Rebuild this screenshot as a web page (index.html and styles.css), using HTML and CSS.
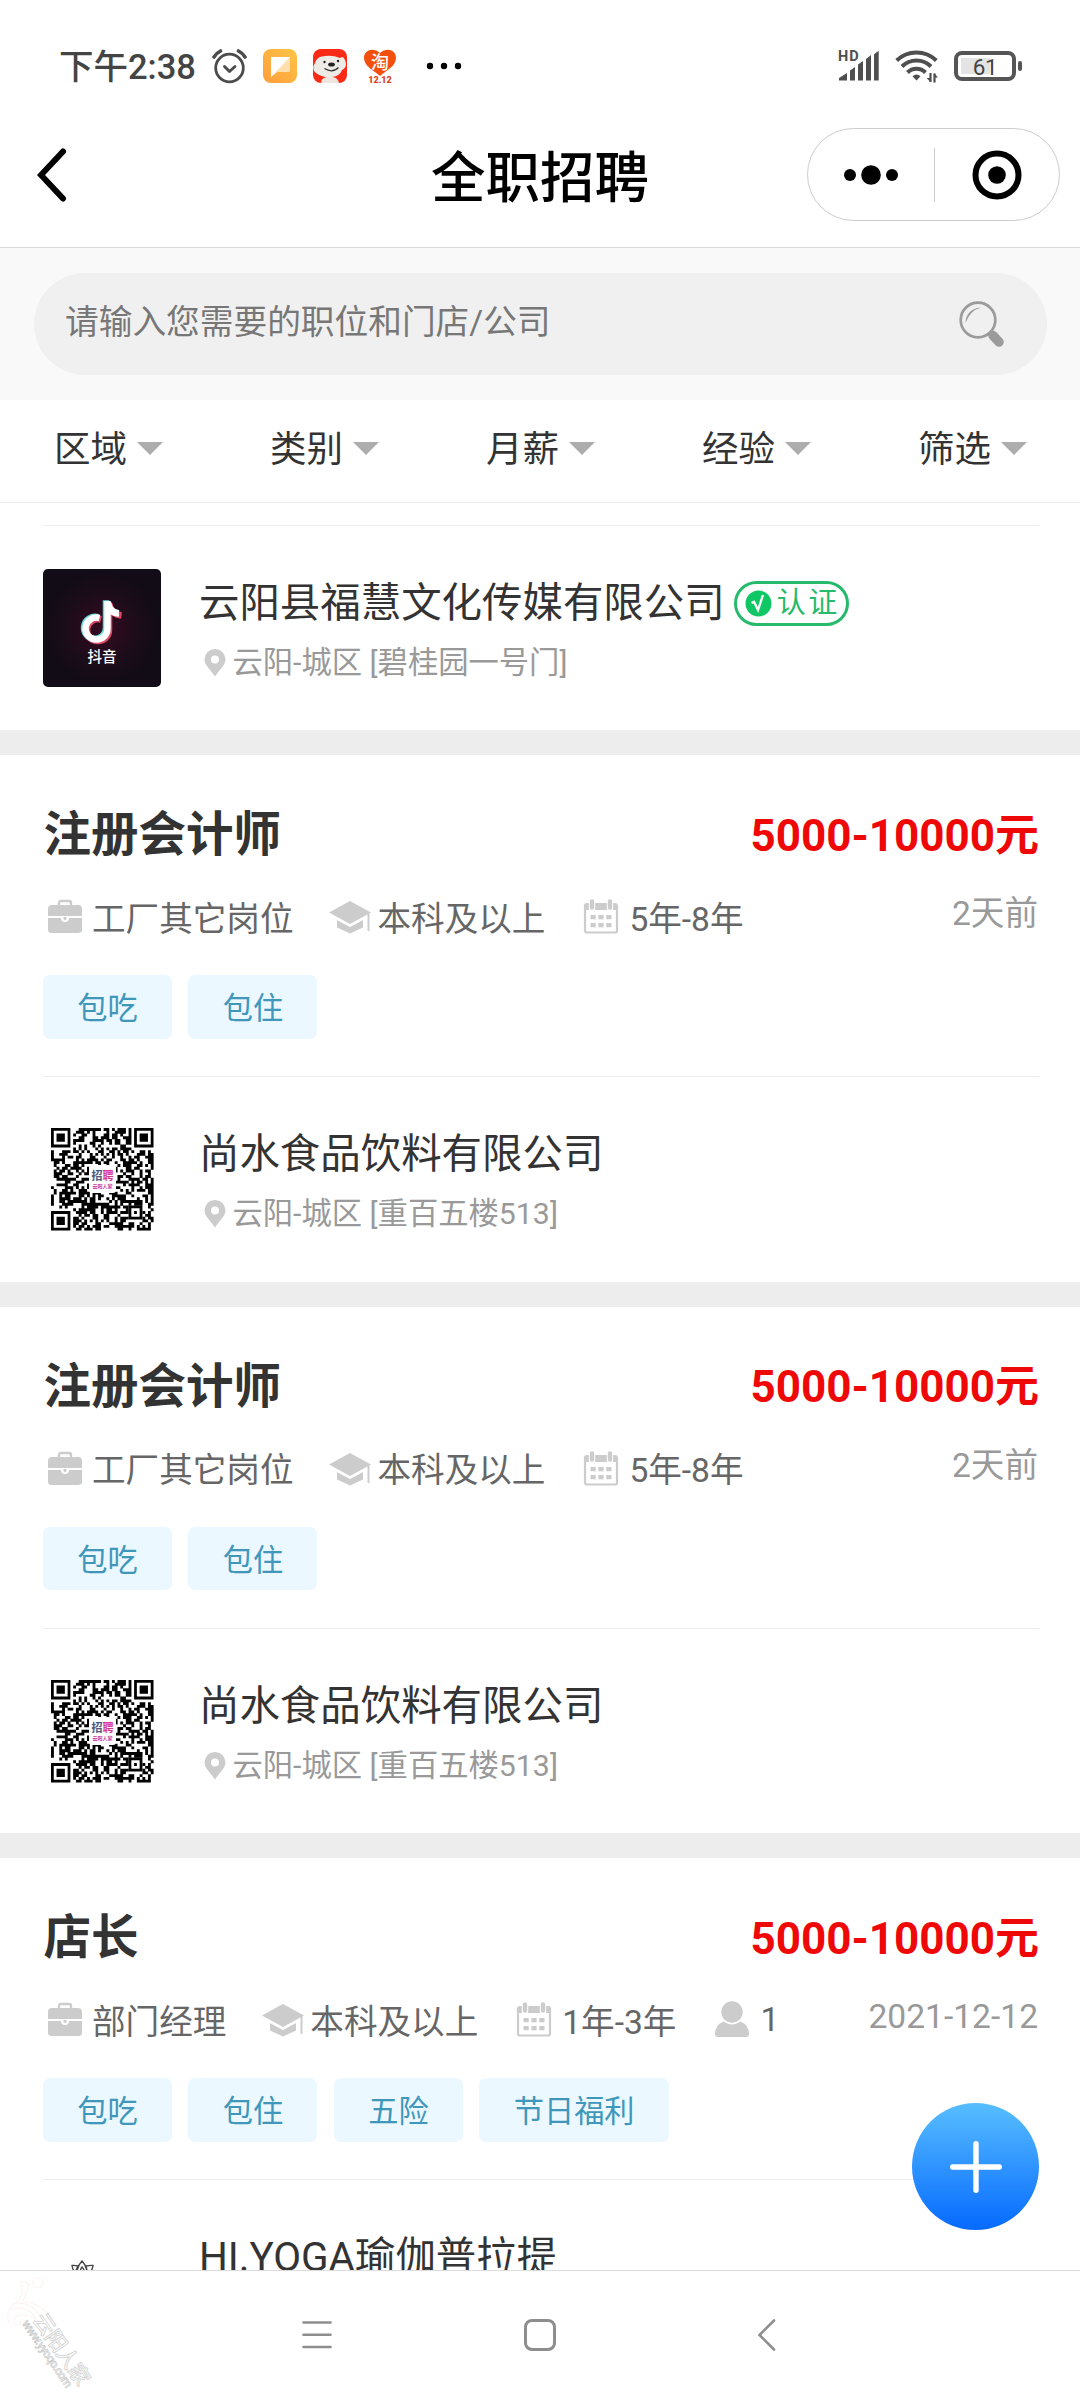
FILE: index.html
```html
<!DOCTYPE html>
<html lang="zh-CN">
<head>
<meta charset="utf-8">
<title>全职招聘</title>
<link rel="stylesheet" href="styles.css">
</head>
<body>
<svg class="defs" width="0" height="0" aria-hidden="true">
  <symbol id="i-case" viewBox="0 0 42 36">
    <path d="M15 7V4q0-2 2-2h8q2 0 2 2v3" fill="none" stroke="#ccc" stroke-width="2.4"/>
    <path d="M8 6h26q4 0 4 4v7H4v-7q0-4 4-4zM4 19h13a4 4 0 0 0 8 0h13v12q0 3-4 3H8q-4 0-4-3z" fill="#ccc"/>
    <path d="M19 17.500h4v2a2 2 0 0 1-4 0z" fill="#ccc" stroke="#fff" stroke-width="1"/>
  </symbol>
  <symbol id="i-cap" viewBox="0 0 42 36">
    <path d="M21 2L42 13.500 21 25 0 13.500z" fill="#ccc"/>
    <path d="M8 21l13 7 13-7v7.500L21 34.500 8 28.500z" fill="#ccc"/>
    <path d="M8 20.200l13 6.600 13-6.600" fill="none" stroke="#fff" stroke-width="1.200"/>
    <path d="M39.500 14v18" stroke="#ccc" stroke-width="2"/>
  </symbol>
  <symbol id="i-cal" viewBox="0 0 42 36">
    <path d="M4 11V7q0-3 3-3h26q3 0 3 3v4z" fill="#ccc"/>
    <rect x="4" y="5" width="32" height="28.500" rx="2" fill="none" stroke="#ccc" stroke-width="2.200"/>
    <path d="M11 3v6M29 3v6" stroke="#fff" stroke-width="6.400" stroke-linecap="round"/>
    <path d="M11 2.500v6M29 2.500v6" stroke="#ccc" stroke-width="4.400" stroke-linecap="round"/>
    <path d="M9.500 16h5.200v4.200H9.500zM17.400 16h5.200v4.200h-5.200zM25.300 16h5.200v4.200h-5.200zM9.500 24h5.200v4.200H9.500zM17.400 24h5.200v4.200h-5.200zM25.300 24h5.200v4.200h-5.200z" fill="#ccc"/>
  </symbol>
  <symbol id="i-user" viewBox="0 0 42 38">
    <circle cx="20" cy="12" r="10.700" fill="#ccc"/>
    <path d="M3 34q0-9 8.500-12.500Q20 27.500 28.500 21.500 37 25 37 34q0 3-3 3H6q-3 0-3-3z" fill="#ccc"/>
  </symbol>
  <symbol id="i-pin" viewBox="0 0 22 28">
    <path d="M11 0a10.500 10.500 0 0 1 10.500 10.500C21.500 16.500 15 21 11 27.500 7 21 .500 16.500 .500 10.500A10.500 10.500 0 0 1 11 0zm0 6.600a4 4 0 1 0 0 8 4 4 0 0 0 0-8z" fill="#ccc" fill-rule="evenodd"/>
  </symbol>
</svg>

<div class="screen">
  <header class="status">
    <div class="status-left">
      <span class="clock">下午2:38</span>
      <svg class="st-icon" width="35" height="35" viewBox="0 0 35 35" fill="none" stroke="#4c4c4c" stroke-linecap="round">
        <circle cx="17.500" cy="19" r="13.800" stroke-width="2.800"/>
        <path d="M12.500 17.500l5 5 5.500-5" stroke-width="2.900" stroke-linejoin="round"/>
        <path d="M2 8q2.500-4 6.500-6M33 8q-2.500-4-6.500-6" stroke-width="3.600"/>
      </svg>
      <svg class="st-icon" width="34" height="34" viewBox="0 0 34 34">
        <defs><linearGradient id="g-note" x1="1" y1="0" x2="0" y2="1"><stop offset="0" stop-color="#ffc545"/><stop offset="1" stop-color="#ff9d3b"/></linearGradient></defs>
        <rect width="34" height="34" rx="8" fill="url(#g-note)"/>
        <path d="M8 8h19v13.500q0 1.500-1.500 1.500H14.500L8 28z" fill="#ffdfae"/>
        <path d="M8 8h19L8 28z" fill="#fff"/>
      </svg>
      <svg class="st-icon" width="34" height="34" viewBox="0 0 34 34">
        <rect width="34" height="34" rx="8" fill="#fa2a17"/>
        <path d="M2 14Q4 7 12 7q8-1 15 2 3-3 5 2 3 7-3 10-2 6-10 7-10 1-16-4-5-4-1-10z" fill="#eeeae6"/>
        <path d="M8 34q0-5 6-6h6q5 1 6 6z" fill="#eee5df"/>
        <ellipse cx="18.500" cy="15.500" rx="3.400" ry="2" fill="#222"/>
        <circle cx="11.500" cy="13" r="1.200" fill="#222"/><circle cx="25" cy="12" r="1.200" fill="#222"/>
        <path d="M11.500 19.500q8 5 14-1" fill="none" stroke="#333" stroke-width="1.200"/>
      </svg>
      <svg class="st-icon" width="34" height="35" viewBox="0 0 34 35">
        <path d="M17 27C10 21 1 17 1 9 1 3 6 0 11 1q3 0 6 3 3-3 6-3c5-1 10 2 10 8 0 8-9 12-16 18z" fill="#f4500d"/>
        <text x="17" y="20" text-anchor="middle" class="t-tao">淘</text>
        <text x="17" y="34" text-anchor="middle" class="t-1212">12.12</text>
      </svg>
      <svg class="st-dots" width="36" height="8" viewBox="0 0 36 8"><circle cx="4" cy="4" r="3.200"/><circle cx="18" cy="4" r="3.200"/><circle cx="32" cy="4" r="3.200"/></svg>
    </div>
    <div class="status-right">
      <svg width="43" height="34" viewBox="0 0 43 34">
        <text x="1" y="12" class="t-hd">HD</text>
        <path d="M2 31.500v-2.500l8-5v7.500zM13 31.500V21.500l5-3.500v13.500zM21 31.500V15.500l5-3.500v19.500zM29 31.500V10l5-4v25.500zM37 31.500V5.500q2-2.500 4.700-3.500v29.500z" fill="#4f4f4f"/>
      </svg>
      <svg width="44" height="36" viewBox="0 0 44 36" fill="none" stroke="#4f4f4f" stroke-width="4">
        <path d="M1.700 12.500a28.500 28.500 0 0 1 39.600 0M7 18.500a20.500 20.500 0 0 1 29 0M12.500 24.500a12.700 12.700 0 0 1 18 0"/>
        <path d="M21.500 32.500l-4-4.200q4-3.600 8 0z" fill="#4f4f4f" stroke="none"/>
        <path d="M35.500 25v9M39.500 25.500v9" stroke-width="2.200"/>
        <path d="M36 34.500l-4.500-4.500H36zM39 25l4 4.500h-4z" fill="#4f4f4f" stroke="none"/>
      </svg>
      <div class="battery"><span class="battery-level"></span><span class="battery-num">61</span></div>
    </div>
  </header>

  <nav class="titlebar">
    <svg class="back" width="30" height="54" viewBox="0 0 30 54"><path d="M26 3.500L4 27l22 23.500" fill="none" stroke="#000" stroke-width="6" stroke-linecap="round"/></svg>
    <h1>全职招聘</h1>
    <div class="capsule">
      <svg width="54" height="20" viewBox="0 0 54 20"><circle cx="6" cy="10" r="6"/><circle cx="27" cy="10" r="9.800"/><circle cx="48" cy="10" r="6"/></svg>
      <span class="capsule-line"></span>
      <svg width="50" height="50" viewBox="0 0 50 50"><circle cx="25" cy="25" r="21.500" fill="none" stroke="#000" stroke-width="6"/><circle cx="25" cy="25" r="8.800"/></svg>
    </div>
  </nav>

  <div class="search-wrap">
    <div class="search">
      <span>请输入您需要的职位和门店/公司</span>
      <svg width="46" height="46" viewBox="0 0 46 46">
        <circle cx="19" cy="19" r="17.300" fill="none" stroke="#9b9b9b" stroke-width="2.700"/>
        <path d="M6.500 22Q7 8 22 6.500 11 9.500 6.500 22z" fill="#9b9b9b"/>
        <path d="M34 34.500l6 6.500" stroke="#9b9b9b" stroke-width="9.500" stroke-linecap="round"/>
      </svg>
    </div>
  </div>

  <div class="filters">
    <div class="filter"><span>区域</span><i></i></div>
    <div class="filter"><span>类别</span><i></i></div>
    <div class="filter"><span>月薪</span><i></i></div>
    <div class="filter"><span>经验</span><i></i></div>
    <div class="filter"><span>筛选</span><i></i></div>
  </div>

  <main class="list">
    <section class="card card-first">
      <div class="company">
        <svg class="logo" width="118" height="118" viewBox="0 0 118 118">
          <defs><radialGradient id="g-dy"><stop offset="0" stop-color="#360a20"/><stop offset=".6" stop-color="#1c0c1a"/><stop offset="1" stop-color="#110c16"/></radialGradient></defs>
          <rect width="118" height="118" fill="url(#g-dy)"/>
          <g fill="none" stroke-width="6.500">
            <path d="M64.500 32v27.500a11 11 0 1 1-8-10.500M65 34q2 10 12 11" stroke="#62d7d9" transform="translate(-1.500 -.8)"/>
            <path d="M64.500 32v27.500a11 11 0 1 1-8-10.500M65 34q2 10 12 11" stroke="#e04a68" transform="translate(1.500 1.500)"/>
            <path d="M64.500 32v27.500a11 11 0 1 1-8-10.500M65 34q2 10 11 10.500" stroke="#fff"/>
          </g>
          <text x="59" y="93" text-anchor="middle" class="t-dy">抖音</text>
        </svg>
        <div class="company-text">
          <div class="name">云阳县福慧文化传媒有限公司
            <span class="verified"><svg width="27" height="27" viewBox="0 0 27 27"><circle cx="13.500" cy="13.500" r="13" fill="#10c765"/><path d="M6.500 13l2.500-1.300 4 8.300L18 5" fill="none" stroke="#fff" stroke-width="2.300"/></svg>认证</span>
          </div>
          <div class="addr"><svg width="22" height="28"><use href="#i-pin"/></svg>云阳-城区 [碧桂园一号门]</div>
        </div>
      </div>
    </section>

    <section class="card">
      <div class="head"><h2>注册会计师</h2><span class="pay">5000-10000元</span></div>
      <div class="meta">
        <span class="m"><svg width="42" height="36"><use href="#i-case"/></svg><b>工厂其它岗位</b></span>
        <span class="m"><svg width="42" height="36"><use href="#i-cap"/></svg><b>本科及以上</b></span>
        <span class="m"><svg width="42" height="36"><use href="#i-cal"/></svg><b>5年-8年</b></span>
        <span class="date">2天前</span>
      </div>
      <div class="tags"><span>包吃</span><span>包住</span></div>
      <div class="company">
        <svg class="logo qr" width="118" height="118" viewBox="0 0 118 118"></svg>
        <div class="company-text">
          <div class="name">尚水食品饮料有限公司</div>
          <div class="addr"><svg width="22" height="28"><use href="#i-pin"/></svg>云阳-城区 [重百五楼513]</div>
        </div>
      </div>
    </section>

    <section class="card">
      <div class="head"><h2>注册会计师</h2><span class="pay">5000-10000元</span></div>
      <div class="meta">
        <span class="m"><svg width="42" height="36"><use href="#i-case"/></svg><b>工厂其它岗位</b></span>
        <span class="m"><svg width="42" height="36"><use href="#i-cap"/></svg><b>本科及以上</b></span>
        <span class="m"><svg width="42" height="36"><use href="#i-cal"/></svg><b>5年-8年</b></span>
        <span class="date">2天前</span>
      </div>
      <div class="tags"><span>包吃</span><span>包住</span></div>
      <div class="company">
        <svg class="logo qr" width="118" height="118" viewBox="0 0 118 118"></svg>
        <div class="company-text">
          <div class="name">尚水食品饮料有限公司</div>
          <div class="addr"><svg width="22" height="28"><use href="#i-pin"/></svg>云阳-城区 [重百五楼513]</div>
        </div>
      </div>
    </section>

    <section class="card">
      <div class="head"><h2>店长</h2><span class="pay">5000-10000元</span></div>
      <div class="meta">
        <span class="m"><svg width="42" height="36"><use href="#i-case"/></svg><b>部门经理</b></span>
        <span class="m"><svg width="42" height="36"><use href="#i-cap"/></svg><b>本科及以上</b></span>
        <span class="m"><svg width="42" height="36"><use href="#i-cal"/></svg><b>1年-3年</b></span>
        <span class="m"><svg class="user" width="42" height="38"><use href="#i-user"/></svg><b>1</b></span>
        <span class="date">2021-12-12</span>
      </div>
      <div class="tags"><span>包吃</span><span>包住</span><span>五险</span><span>节日福利</span></div>
      <div class="company">
        <svg class="logo" width="118" height="118" viewBox="0 0 118 118">
          <path d="M31 52l4-9q-4-1-6-.500 1 6 5 9M45 52l-2-9q5-1 7-.500-1 6-5 9M34 48q1-6 5-10 4 4 5 10M37 52q0-6 2-8 3 3 3 8" fill="none" stroke="#444" stroke-width="1.400"/>
        </svg>
        <div class="company-text"><div class="name">HI.YOGA瑜伽普拉提</div></div>
      </div>
    </section>

    <button class="fab" aria-label="发布"><svg width="52" height="52" viewBox="0 0 52 52"><path d="M26 2.700v46.600M2.700 26h46.600" stroke="#fff" stroke-width="5.400" stroke-linecap="round"/></svg></button>
  </main>

  <footer class="sysnav">
    <svg width="30" height="30" viewBox="0 0 30 30"><path d="M1.500 2.500h27M1.500 14.800h27M1.500 27h27" stroke="#8e8e8e" stroke-width="2.600" stroke-linecap="round"/></svg>
    <svg class="home" width="32" height="32" viewBox="0 0 32 32"><rect x="1.500" y="1.500" width="29" height="29" rx="6.500" fill="none" stroke="#8e8e8e" stroke-width="3"/></svg>
    <svg width="19" height="32" viewBox="0 0 19 32"><path d="M17 1.500L2.500 16 17 30.500" fill="none" stroke="#8e8e8e" stroke-width="2.600" stroke-linecap="round"/></svg>
    <svg class="mark" width="110" height="129" viewBox="0 0 110 129">
      <path d="M20 10q7 1 9 3-3 11-6 17 14 2 26 13M20 10q6 10-2 20-14 8-9 22M12 33q18-4 28 12M10 38q20-4 26 10-10-6-19-3-6 5-1 9 6 1 4-5M38 17a5 5 0 1 1 .100 0" fill="none" stroke="#fbf3f2" stroke-width="1.200"/>
      <g transform="translate(33 46) rotate(55.500)">
        <text x="2" y="2" class="t-mark" textLength="82">云阳人家</text>
        <text x="-1" y="13" class="t-url" textLength="79">www.yyoqo.com</text>
      </g>
    </svg>
  </footer>
</div>
<script src="qr.js"></script>
</body>
</html>
```
FILE: styles.css
```css
* { box-sizing: border-box; }
body {
  margin: 0;
  background: #fff;
  color: #333;
  font-family: Roboto, "Noto Sans CJK SC", sans-serif;
}
svg { display: block; flex: none; }
h1, h2 { margin: 0; }
b { font-weight: 400; }
.defs { position: absolute; }
.screen {
  width: 1080px;
  height: 2400px;
  overflow: hidden;
  display: flex;
  flex-direction: column;
}

.status {
  height: 102px;
  padding: 30px 58px 0 59px;
  display: flex;
  justify-content: space-between;
}
.status-left, .status-right { height: 72px; display: flex; align-items: center; }
.clock { width: 153px; padding-bottom: 4px; font-size: 34.500px; font-weight: 500; color: #444; white-space: nowrap; }
.st-icon { margin-right: 16px; }
.st-dots { margin-left: 13px; }
.status-right { gap: 15px; }
.t-tao { font-size: 18px; fill: #fff; font-weight: 500; }
.t-1212 { font-size: 9px; fill: #d9441c; font-weight: 900; }
.t-hd { font-size: 14.500px; fill: #4f4f4f; font-weight: 700; letter-spacing: 1px; }
.battery {
  position: relative;
  width: 62px;
  height: 30px;
  margin-right: 6px;
  border: 4px solid #555;
  border-radius: 8px;
  text-align: center;
}
.battery::after {
  content: "";
  position: absolute;
  right: -10px;
  top: 6px;
  width: 4px;
  height: 10px;
  border-radius: 2px;
  background: #555;
}
.battery-level { position: absolute; left: 3px; top: 3px; width: 29px; height: 16px; background: #e4e4e4; }
.battery-num { position: relative; font-size: 22.500px; line-height: 24px; color: #444; letter-spacing: -0.500px; }

.titlebar {
  height: 146px;
  padding: 0 20px 0 37px;
  border-bottom: 1px solid #d9d9d9;
  display: grid;
  grid-template-columns: 1fr auto 1fr;
  align-items: center;
}
.titlebar h1 { font-size: 54.500px; font-weight: 500; line-height: 80px; color: #000; padding-top: 6px; margin-left: -17px; }
.capsule {
  justify-self: end;
  width: 253px;
  height: 93px;
  border: 1px solid #ccc;
  border-radius: 47px;
  padding: 0 37px 0 36px;
  display: flex;
  align-items: center;
  justify-content: space-between;
}
.capsule-line { width: 1px; height: 54px; background: #ccc; margin-right: 1px; }

.search-wrap { height: 152px; padding: 25px 33px 0 34px; background: #f9f9f9; }
.search {
  height: 102px;
  border-radius: 51px;
  background: #f0f0f0;
  padding: 0 42px 0 31px;
  display: flex;
  align-items: center;
  justify-content: space-between;
  font-size: 33.700px;
  color: #777;
}
.search span { line-height: 50px; margin-top: -2px; }

.filters {
  height: 103px;
  border-bottom: 1px solid #ebebeb;
  display: grid;
  grid-template-columns: repeat(5, 216px);
}
.filter {
  display: flex;
  align-items: center;
  justify-content: center;
  gap: 10px;
  height: 97px;
  padding-left: 1px;
  font-size: 36.500px;
}
.filter span { margin-top: -4px; }
.filter i { border: 13px solid transparent; border-top-color: #adadad; border-bottom: 0; }

.list { position: relative; height: 1767px; overflow: hidden; }
.card { height: 551.500px; padding: 47px 41px 0 43px; border-bottom: 25px solid #ededed; }
.card-first { height: 252px; padding-top: 22px; }
.head { height: 66px; display: flex; align-items: center; justify-content: space-between; }
.head h2 { font-size: 47.500px; line-height: 66px; font-weight: 700; padding-left: 0.500px; }
.pay { font-size: 44px; line-height: 56px; margin-top: 1px; font-weight: 700; color: #ee0808; }
.meta { height: 50px; margin-top: 25px; padding-left: 1px; display: flex; gap: 36px; font-size: 33.600px; color: #666; }
.m { display: flex; align-items: center; gap: 6px; white-space: nowrap; }
.m svg { margin-top: -2px; }
.m b { margin-top: -4px; }
.m .user { margin-top: -5px; }
.date { margin-left: auto; line-height: 42px; color: #999; padding-right: 1px; }
.tags { display: flex; gap: 16.500px; margin-top: 32px; }
.tags span {
  height: 63.500px;
  padding: 0 34.300px;
  border-radius: 7px;
  background: #ecf8ff;
  color: #3f97bb;
  font-size: 30.200px;
  line-height: 68px;
}
.company { display: flex; gap: 38px; padding-top: 43px; border-top: 1px solid #eee; }
.tags + .company { margin-top: 37.500px; }
.logo { border-radius: 5px; }
.company-text { padding-top: 6px; }
.name { display: flex; align-items: center; font-size: 40.450px; line-height: 56px; height: 56px; white-space: nowrap; }
.addr { display: flex; align-items: center; gap: 6.500px; margin-top: 12px; padding-left: 5px; font-size: 30.300px; line-height: 40px; color: #999; white-space: nowrap; }
.verified {
  display: flex;
  align-items: center;
  gap: 5px;
  width: 115px;
  height: 45px;
  margin-left: 9px;
  padding-left: 8px;
  border: 3px solid #26bb6c;
  border-radius: 23px;
  color: #26bb6c;
  font-size: 29px;
  line-height: 38px;
  letter-spacing: 2.500px;
}
.t-dy { font-size: 14.500px; fill: #fff; font-weight: 500; }
.t-qr { font-size: 11px; font-weight: 700; }
.t-qr-sub { font-size: 5px; font-weight: 700; fill: #c8328e; }

.fab {
  position: absolute;
  left: 912px;
  top: 1600px;
  width: 127px;
  height: 127px;
  padding: 0;
  border: 0;
  border-radius: 50%;
  background: linear-gradient(#58beff, #066aff);
  display: grid;
  place-items: center;
}

.sysnav {
  position: relative;
  height: 130px;
  border-top: 1px solid #ddd;
  padding: 0 304px 1px 302px;
  display: flex;
  align-items: center;
  justify-content: space-between;
}
.home { margin-right: 10px; }
.mark { position: absolute; left: 0; top: 0; }
.t-mark { font-size: 21px; font-weight: 500; fill: #fff; stroke: #d2d2d2; stroke-width: 0.800px; }
.t-url { font-size: 12px; font-weight: 500; fill: #f4f4f4; stroke: #cacaca; stroke-width: 0.600px; }
```
FILE: qr.js
```js
// Draws a 37-module QR style pattern with finder and alignment squares.
const N = 37;
const UNIT = 102.5 / N;
const OFFSET = 8;

function square(x, y, size) {
  return `M${OFFSET + x * UNIT} ${OFFSET + y * UNIT}h${size * UNIT}v${size * UNIT}h${-size * UNIT}z`;
}

function pattern() {
  let seed = 20211;
  const rand = () => (seed = (seed * 16807) % 2147483647) / 2147483647;
  const finder = (x, y) =>
    (x < 8 && y < 8) || (x > N - 9 && y < 8) || (x < 8 && y > N - 9);
  let d = '';
  for (let y = 0; y < N; y++) {
    for (let x = 0; x < N; x++) {
      const dark = rand() > 0.48;
      const align = x > 27 && x < 33 && y > 27 && y < 33;
      if (dark && !finder(x, y) && !align) d += square(x, y, 1.04);
    }
  }
  return d;
}

function ring(x, y, size) {
  return square(x, y, size) + square(x + 1, y + 1, size - 2);
}

const body =
  `<path d="${pattern()}"/>` +
  `<path fill-rule="evenodd" d="${ring(0, 0, 7)}${ring(30, 0, 7)}${ring(0, 30, 7)}${ring(28, 28, 5)}"/>` +
  `<path d="${square(2, 2, 3)}${square(32, 2, 3)}${square(2, 32, 3)}${square(30, 30, 1)}"/>` +
  '<rect x="46" y="45" width="27" height="28" rx="3" fill="#fff"/>' +
  '<text x="48.500" y="60" class="t-qr" fill="#4b5680">招<tspan fill="#d83a96">聘</tspan></text>' +
  '<text x="49.500" y="67.500" class="t-qr-sub">云阳人家</text>';

document.querySelectorAll('.qr').forEach((svg) => { svg.innerHTML = body; });
```
